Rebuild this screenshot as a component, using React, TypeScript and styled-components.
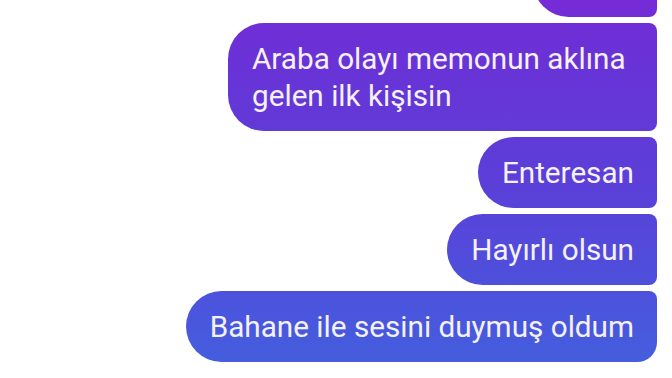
import React from "react";
import styled, { createGlobalStyle } from "styled-components";

const GlobalStyle = createGlobalStyle`
  html, body {
    margin: 0;
    padding: 0;
    background: #ffffff;
    overflow: hidden;
  }
  body {
    font-family: Roboto, "Noto Sans", sans-serif;
  }
`;

type Tail = "middle" | "last";

interface Message {
  text: string;
  tail: Tail;
  wrap?: boolean;
}

const messages: Message[] = [
  { text: "Araba olayı memonun aklına gelen ilk kişisin", tail: "middle", wrap: true },
  { text: "Enteresan", tail: "middle" },
  { text: "Hayırlı olsun", tail: "middle" },
  { text: "Bahane ile sesini duymuş oldum", tail: "last" },
];

const App: React.FC = () => {
  return (
    <>
      <GlobalStyle />
      <StyledThread>
        {/* earlier message, scrolled mostly out of view */}
        <StyledScrolledBubble aria-hidden />
        {messages.map((m, i) => (
          <StyledBubble key={i} $tail={m.tail} $wrap={!!m.wrap}>
            {m.text}
          </StyledBubble>
        ))}
      </StyledThread>
    </>
  );
};

export default App;

const StyledThread = styled.div`
  display: flex;
  flex-direction: column;
  align-items: flex-end;
  gap: 6px;
  padding: 0 15px 0 0;
  width: 672px;
  height: 378px;
  box-sizing: border-box;
  overflow: hidden;
`;

const bubbleBg = `
  background: linear-gradient(180deg, #762bd6 0%, #6c30d6 10%, #5a40d8 50%, #4a55dd 82%, #4360dd 100%);
  background-attachment: fixed;
`;

const StyledScrolledBubble = styled.div`
  flex: none;
  width: 124px;
  height: 71px;
  margin-top: -54px;
  border-radius: 36px 8px 8px 36px;
  ${bubbleBg}
`;

const StyledBubble = styled.div<{ $tail: Tail; $wrap: boolean }>`
  box-sizing: border-box;
  padding: 17px 23px 17px 24px;
  max-width: ${(p) => (p.$wrap ? "429px" : "none")};
  white-space: ${(p) => (p.$wrap ? "normal" : "nowrap")};
  font-size: 29.7px;
  line-height: 37px;
  color: #f4f1fb;
  ${bubbleBg}
  border-radius: ${(p) =>
    p.$tail === "last" ? "36px 8px 20px 36px" : "36px 8px 8px 36px"};
`;
